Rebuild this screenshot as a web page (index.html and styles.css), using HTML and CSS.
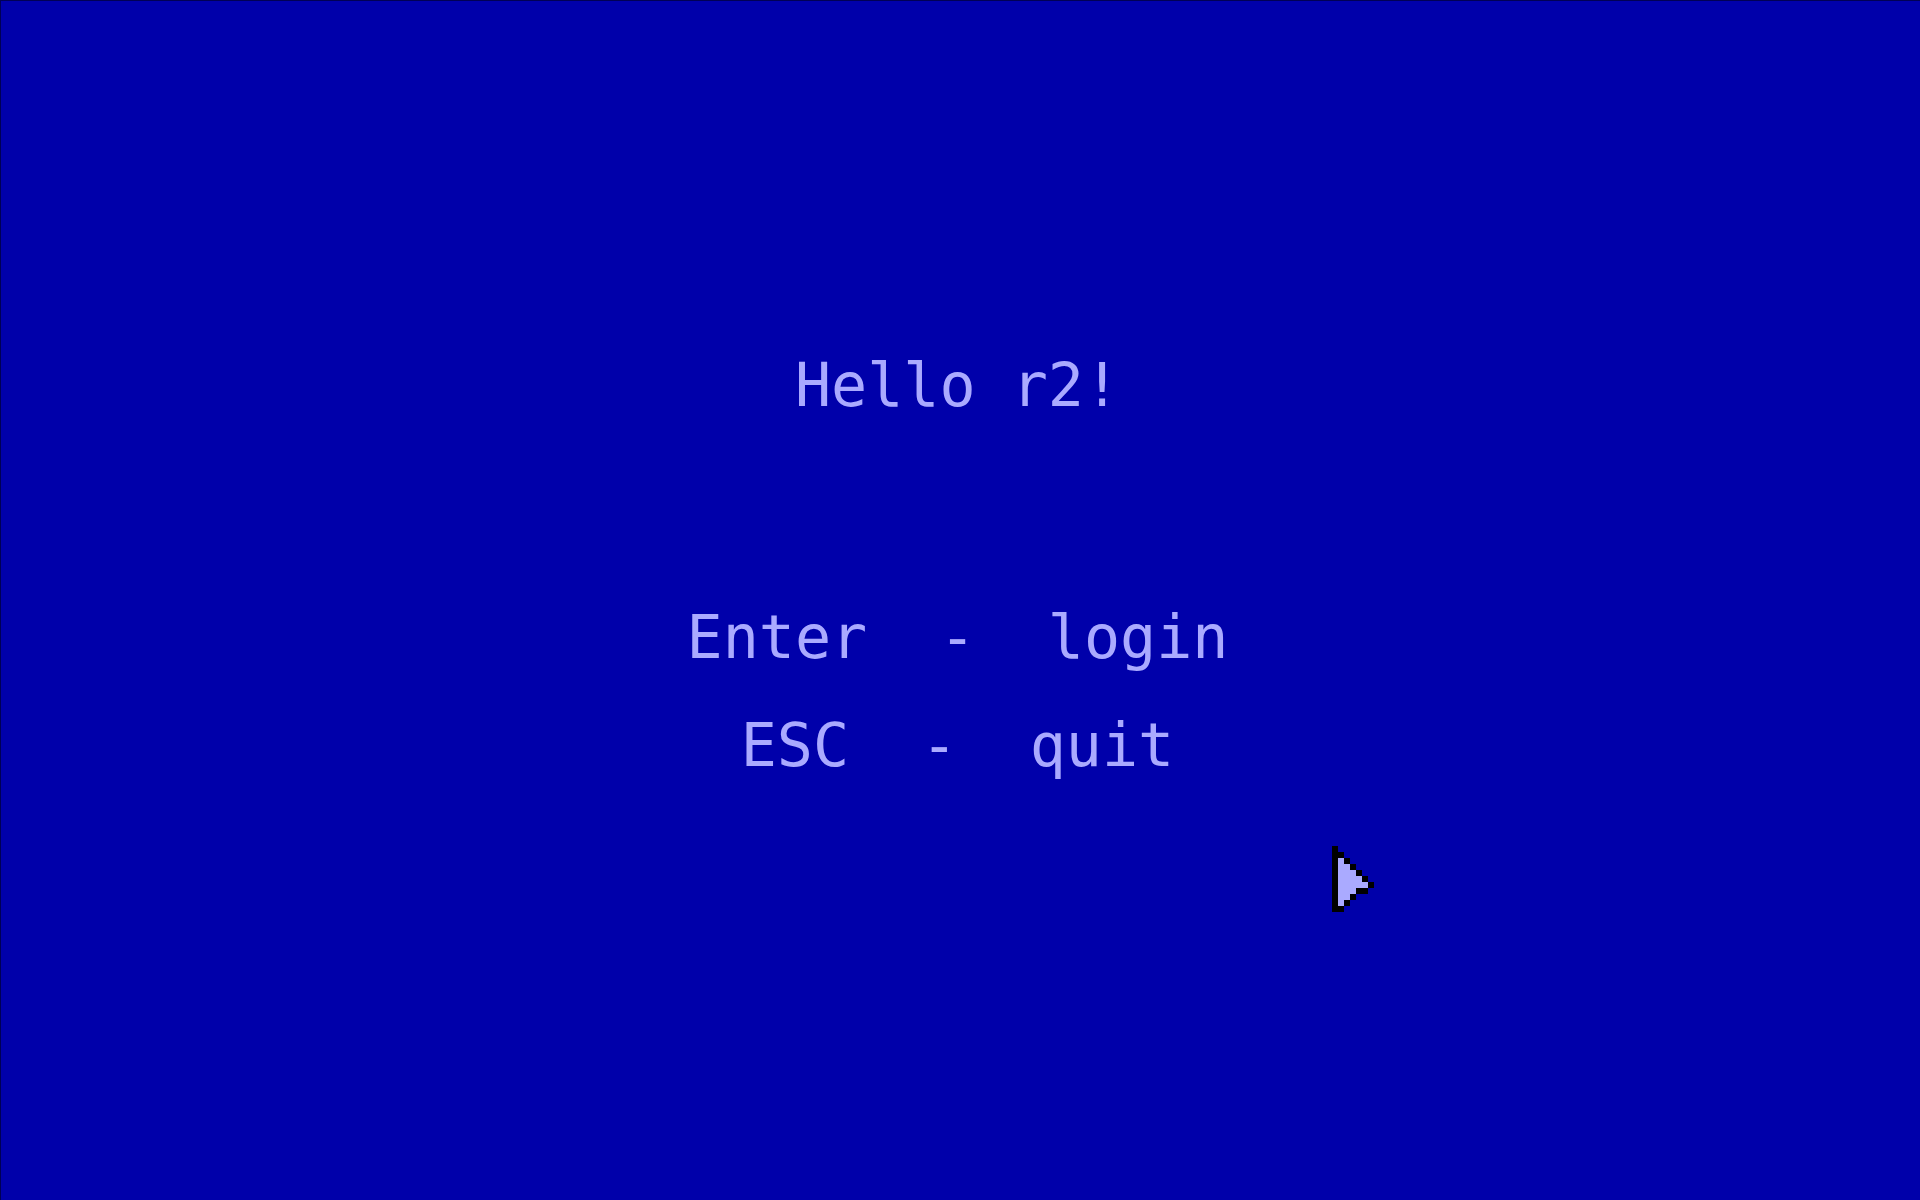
FILE: index.html
```
<!DOCTYPE html>
<html lang="en">

<head>
    <meta charset="UTF-8">
    <meta name="viewport" content="width=device-width, initial-scale=1.0">
    <title>Login</title>
    <link rel="stylesheet" href="styles.css">
</head>

<body>

    <main class="screen">
        <h1 class="greeting">Hello r2!</h1>
        <p class="option">Enter  -  login</p>
        <p class="option">ESC  -  quit</p>
    </main>

    <!-- Mouse pointer, one unit per pixel -->
    <svg class="pointer" viewBox="0 0 7 11" shape-rendering="crispEdges" aria-hidden="true">
        <path fill="#000" d="M0 0h1v1h1v1h1v1h1v1h1v1h1v1h1v1h-1v1h-2v1h-1v1h-1v1h-2z" />
        <path fill="#aaf" d="M1 2h1v1h1v1h1v1h1v1h1v1h-2v1h-1v1h-1v1h-1z" />
    </svg>

</body>

</html>
```
FILE: styles.css
```
* {
    box-sizing: border-box;
}

body {
    margin: 0;
    background-color: #0000aa;
    color: #aaaaff;
    font-family: "DejaVu Sans Mono", monospace;
    font-size: 60px;
    line-height: 108px;
}

.screen {
    min-height: 100vh;
    display: flex;
    flex-direction: column;
    align-items: center;
    justify-content: center;
    padding: 0 6px 72px 0;
    border-top: 1px solid #000055;
    border-left: 1px solid #000055;
}

.greeting {
    margin: 0 0 144px;
    font-size: 60px;
    font-weight: normal;
}

.option {
    margin: 0;
    white-space: pre;
}

.pointer {
    position: absolute;
    left: 1332px;
    top: 846px;
    width: 42px;
    height: 66px;
}
```
